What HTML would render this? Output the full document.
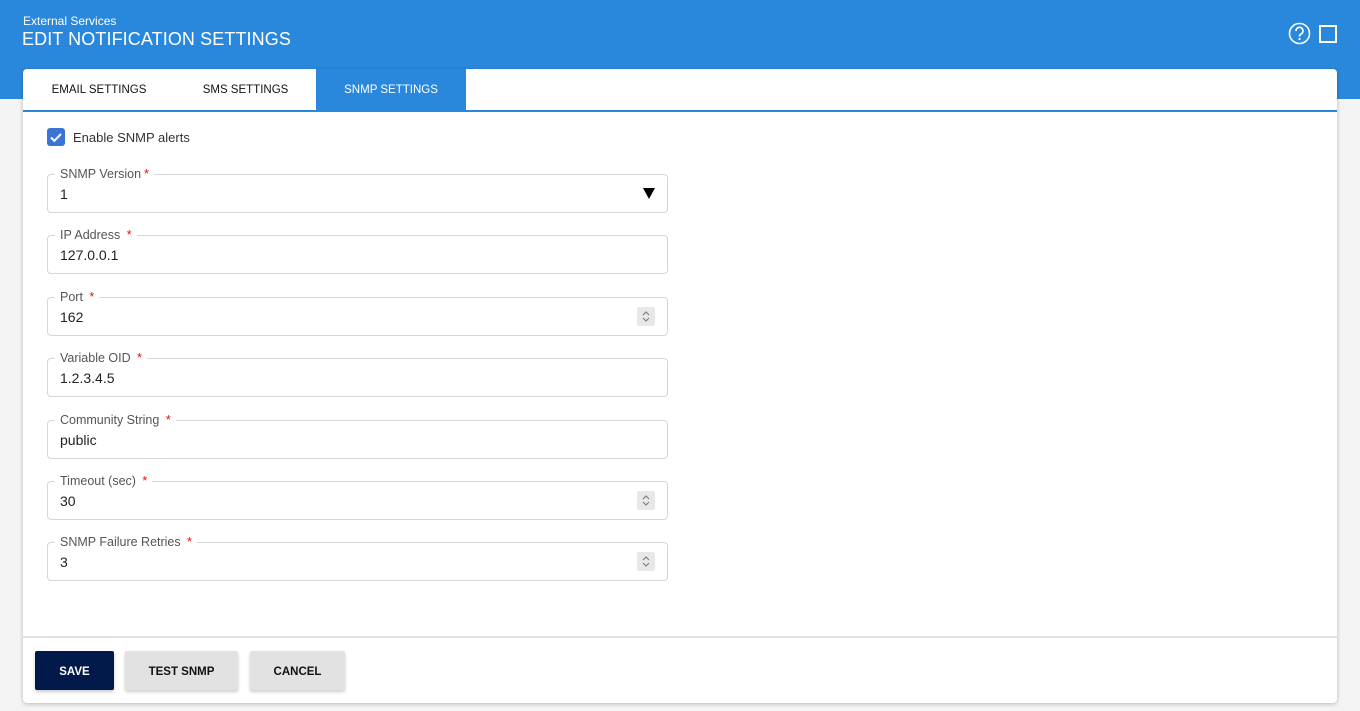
<!DOCTYPE html>
<html><head><meta charset="utf-8">
<style>
*{box-sizing:border-box;margin:0;padding:0}
body{width:1360px;height:711px;overflow:hidden;background:#f4f4f4;font-family:"Liberation Sans",Arial,sans-serif;position:relative}
.hdr{position:absolute;left:0;top:0;width:1360px;height:99px;background:#2a88dc}
.sub{position:absolute;left:23px;top:14px;color:#fff;font-size:12px}
.ttl{position:absolute;left:22px;top:29px;color:#fff;font-size:18px;letter-spacing:0.1px}
.card{position:absolute;left:23px;top:69px;width:1314px;height:634px;background:#fff;border-radius:4px;box-shadow:0 1px 4px rgba(0,0,0,.25)}
.tabs{position:absolute;left:0;top:0;width:1314px;height:43px;border-bottom:2px solid #2a88dc}
.tab{position:absolute;top:0;height:41px;line-height:43px;font-size:11.5px;color:#111;text-align:center;font-weight:500}
.tab.on{background:#2a88dc;color:#fff}
.cb{position:absolute;left:24px;top:59px;width:18px;height:18px;background:#3a74d4;border-radius:3px}
.cbl{position:absolute;left:50px;top:61px;font-size:13px;color:#333}
.f{position:absolute;left:24px;width:621px;height:39px;border:1px solid #d6d6d6;border-radius:4px}
.f .lb{position:absolute;left:7px;top:-8px;background:#fff;padding:0 5px;font-size:12.5px;color:#555;line-height:14px}
.f .lb b{color:#e01010;font-weight:normal;margin-left:3px}
.f .v{position:absolute;left:12px;top:11px;font-size:14px;color:#222}
.sp{position:absolute;right:12px;top:9px;width:18px;height:19px;background:#e8e8e8;border-radius:2px}
.arr{position:absolute;right:12px;top:13px;width:0;height:0;border-left:6px solid transparent;border-right:6px solid transparent;border-top:11px solid #000}
.sep{position:absolute;left:0;top:567px;width:1314px;height:2px;background:#e2e2e2}
.btn{position:absolute;top:582px;height:39px;line-height:43px;text-align:center;font-size:11.5px;font-weight:bold;border-radius:2px;color:#111;background:#e2e2e2;box-shadow:0 2px 3px rgba(0,0,0,.2)}
</style></head><body>
<div class="hdr">
<div class="sub">External Services</div>
<div class="ttl">EDIT NOTIFICATION SETTINGS</div>
<svg style="position:absolute;left:1288px;top:22px" width="23" height="23" viewBox="0 0 23 23"><circle cx="11.5" cy="11.5" r="10" fill="none" stroke="#fff" stroke-width="1.6"/><path d="M8 9a3.5 3.5 0 1 1 5 3c-1 .6-1.5 1.2-1.5 2.5" fill="none" stroke="#fff" stroke-width="1.7"/><circle cx="11.5" cy="17" r="1.1" fill="#fff"/></svg>
<div style="position:absolute;left:1319px;top:25px;width:18px;height:18px;border:2px solid #fff"></div>
</div>
<div class="card">
<div class="tabs">
<div class="tab" style="left:0;width:152px">EMAIL SETTINGS</div>
<div class="tab" style="left:152px;width:141px">SMS SETTINGS</div>
<div class="tab on" style="left:293px;width:150px">SNMP SETTINGS</div>
</div>
<div class="cb"><svg width="18" height="18" viewBox="0 0 18 18"><path d="M4 9.5l3.3 3.3L14 6" fill="none" stroke="#fff" stroke-width="2"/></svg></div>
<div class="cbl">Enable SNMP alerts</div>
<div class="f" style="top:105px"><div class="lb">SNMP Version<b>*</b></div><div class="v">1</div><div class="arr"></div></div>
<div class="f" style="top:166px"><div class="lb">IP Address <b>*</b></div><div class="v">127.0.0.1</div></div>
<div class="f" style="top:228px"><div class="lb">Port <b>*</b></div><div class="v">162</div><div class="sp"><svg width="18" height="19" viewBox="0 0 18 19"><path d="M6 8l3-3 3 3M6 11l3 3 3-3" fill="none" stroke="#777" stroke-width="1"/></svg></div></div>
<div class="f" style="top:289px"><div class="lb">Variable OID <b>*</b></div><div class="v">1.2.3.4.5</div></div>
<div class="f" style="top:351px"><div class="lb">Community String <b>*</b></div><div class="v">public</div></div>
<div class="f" style="top:412px"><div class="lb">Timeout (sec) <b>*</b></div><div class="v">30</div><div class="sp"><svg width="18" height="19" viewBox="0 0 18 19"><path d="M6 8l3-3 3 3M6 11l3 3 3-3" fill="none" stroke="#777" stroke-width="1"/></svg></div></div>
<div class="f" style="top:473px"><div class="lb">SNMP Failure Retries <b>*</b></div><div class="v">3</div><div class="sp"><svg width="18" height="19" viewBox="0 0 18 19"><path d="M6 8l3-3 3 3M6 11l3 3 3-3" fill="none" stroke="#777" stroke-width="1"/></svg></div></div>
<div class="sep"></div>
<div class="btn" style="left:12px;width:79px;background:#021a4a;color:#fff">SAVE</div>
<div class="btn" style="left:102px;width:113px">TEST SNMP</div>
<div class="btn" style="left:227px;width:95px">CANCEL</div>
</div>
</body></html>
